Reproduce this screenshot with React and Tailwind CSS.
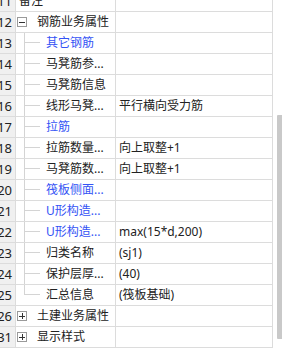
import React from "react";

const rows = [
  { no: "11", label: "备注", level: 0 },
  { no: "12", label: "钢筋业务属性", level: 0, toggle: "-" },
  { no: "13", label: "其它钢筋", level: 1, blue: true },
  { no: "14", label: "马凳筋参...", level: 1 },
  { no: "15", label: "马凳筋信息", level: 1 },
  { no: "16", label: "线形马凳...", level: 1, value: "平行横向受力筋" },
  { no: "17", label: "拉筋", level: 1, blue: true },
  { no: "18", label: "拉筋数量...", level: 1, value: "向上取整+1" },
  { no: "19", label: "马凳筋数...", level: 1, value: "向上取整+1" },
  { no: "20", label: "筏板侧面...", level: 1, blue: true },
  { no: "21", label: "U形构造...", level: 1, blue: true },
  { no: "22", label: "U形构造...", level: 1, blue: true, value: "max(15*d,200)" },
  { no: "23", label: "归类名称", level: 1, value: "(sj1)" },
  { no: "24", label: "保护层厚...", level: 1, value: "(40)" },
  { no: "25", label: "汇总信息", level: 1, value: "(筏板基础)", last: true },
  { no: "26", label: "土建业务属性", level: 0, toggle: "+" },
  { no: "31", label: "显示样式", level: 0, toggle: "+" },
];

function Toggle({ sign }) {
  return (
    <span className="ml-px mr-[10px] flex h-[10px] w-[10px] shrink-0 items-center justify-center border border-[#9a9a9a] bg-white">
      <span className="relative block h-px w-[6px] bg-[#333]">
        {sign === "+" && <span className="absolute left-[2.5px] top-[-2.5px] block h-[6px] w-px bg-[#333]" />}
      </span>
    </span>
  );
}

function Branch({ last }) {
  return (
    <span className="ml-[8px] mr-[6px] flex h-full w-[16px] shrink-0 flex-col">
      <span className="h-[10px] border-b border-l border-[#d4d4d4]" />
      <span className={"flex-1 " + (last ? "" : "border-l border-[#d4d4d4]")} />
    </span>
  );
}

function Row({ row }) {
  return (
    <div className="flex h-[21px] border-b border-[#dcdcdc]">
      <div className="flex w-[16px] shrink-0 items-center justify-end overflow-hidden border-r border-[#dcdcdc] bg-[#f0f0f0] pr-[3px] text-[13px] text-[#222]">
        {row.no}
      </div>
      <div className="flex w-[100px] shrink-0 items-center overflow-hidden whitespace-nowrap border-r border-[#dcdcdc]">
        {row.level === 0 && row.toggle && <Toggle sign={row.toggle} />}
        {row.level === 0 && !row.toggle && <span className="w-[3px]" />}
        {row.level === 1 && <Branch last={row.last} />}
        <span className={row.blue ? "text-[#3453f5]" : "text-[#222]"}>{row.label}</span>
      </div>
      <div className="flex w-[157px] shrink-0 items-center overflow-hidden whitespace-nowrap border-r border-[#dcdcdc] pl-[3px] text-[#222]">
        {row.value}
      </div>
    </div>
  );
}

export default function App() {
  return (
    <div
      className="flex h-[352px] w-[282px] overflow-hidden bg-white text-[12px] leading-none"
      style={{ fontFamily: '"Noto Sans", "Noto Sans CJK SC", sans-serif' }}
    >
      <div className="mt-[-9px] w-[273px] shrink-0">
        {rows.map((r) => (
          <Row key={r.no} row={r} />
        ))}
      </div>
      <div className="ml-[4px] mt-[115px] h-[224px] w-[5px] shrink-0 rounded-l-[1px] bg-[#c9c9c9]" />
    </div>
  );
}
